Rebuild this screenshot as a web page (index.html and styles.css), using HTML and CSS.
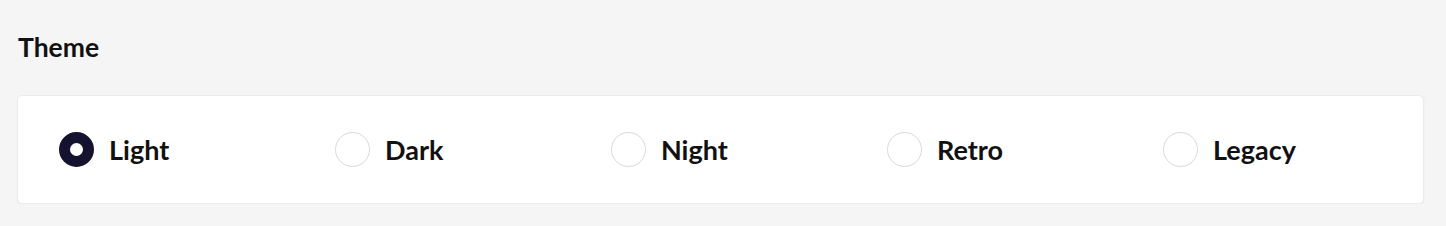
FILE: index.html
```html
<!DOCTYPE html>
<html>
  <head>
    <title>Theme</title>
    <link rel="stylesheet" href="styles.css">
  </head>
  <body>
    <div class="settings">
      <h2 class="section-title">Theme</h2>
      <div class="card">
        <label class="option">
          <input type="radio" name="theme" value="light" checked />
          <span class="radio"></span>
          <span class="label">Light</span>
        </label>
        <label class="option">
          <input type="radio" name="theme" value="dark" />
          <span class="radio"></span>
          <span class="label">Dark</span>
        </label>
        <label class="option">
          <input type="radio" name="theme" value="night" />
          <span class="radio"></span>
          <span class="label">Night</span>
        </label>
        <label class="option">
          <input type="radio" name="theme" value="retro" />
          <span class="radio"></span>
          <span class="label">Retro</span>
        </label>
        <label class="option">
          <input type="radio" name="theme" value="legacy" />
          <span class="radio"></span>
          <span class="label">Legacy</span>
        </label>
      </div>
    </div>
  </body>
</html>
```

FILE: styles.css
```css
/* Page */
body {
  font-family: Lato, "Open Sans", sans-serif;
  background-color: #f5f5f5;
  color: #111;
  margin: 0;
}

.settings {
  padding: 30px 22px 0 17px;
}

/* Section heading */
.section-title {
  font-size: 26.5px;
  font-weight: 700;
  margin: 0 0 31px 1px;
  line-height: 34px;
}

/* Card with the options */
.card {
  background-color: #fff;
  border: 1px solid #ebebeb;
  border-radius: 5px;
  box-shadow: 0 1px 2px rgba(0, 0, 0, 0.05);
  height: 107px;
  padding: 0 0 0 41px;
  display: grid;
  grid-template-columns: repeat(5, 276px);
  align-items: center;
}

.option {
  display: flex;
  align-items: center;
  gap: 15px;
  cursor: pointer;
}

.option input {
  display: none;
}

/* Custom radio */
.radio {
  width: 33px;
  height: 33px;
  border: 1px solid #d9d9d9;
  border-radius: 50%;
  box-sizing: content-box;
  background-color: #fff;
}

.option input:checked + .radio {
  background-color: #fff;
  border: 11px solid #14122f;
  width: 13px;
  height: 13px;
}

.label {
  font-size: 27px;
  font-weight: 700;
}
```
